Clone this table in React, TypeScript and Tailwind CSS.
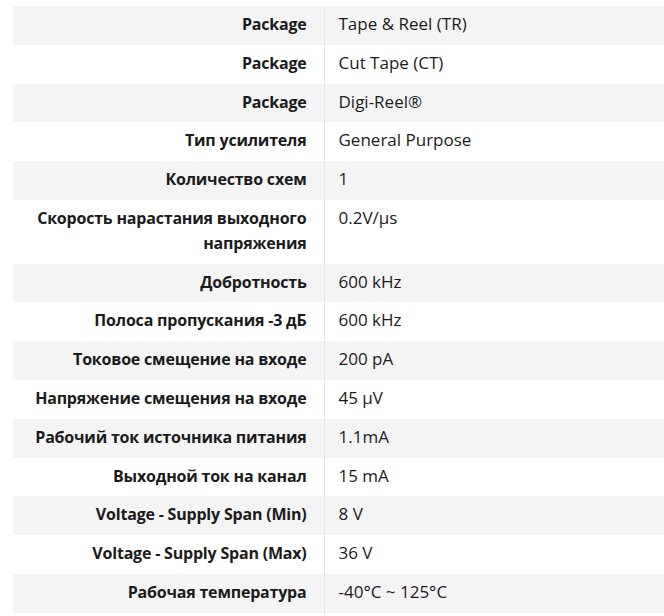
const ROWS: [string, string][] = [
  ["Package", "Tape & Reel (TR)"],
  ["Package", "Cut Tape (CT)"],
  ["Package", "Digi-Reel®"],
  ["Тип усилителя", "General Purpose"],
  ["Количество схем", "1"],
  ["Скорость нарастания выходного напряжения", "0.2V/µs"],
  ["Добротность", "600 kHz"],
  ["Полоса пропускания -3 дБ", "600 kHz"],
  ["Токовое смещение на входе", "200 pA"],
  ["Напряжение смещения на входе", "45 µV"],
  ["Рабочий ток источника питания", "1.1mA"],
  ["Выходной ток на канал", "15 mA"],
  ["Voltage - Supply Span (Min)", "8 V"],
  ["Voltage - Supply Span (Max)", "36 V"],
  ["Рабочая температура", "-40°C ~ 125°C"],
  ["\u00a0", "\u00a0"],
];

export default function App() {
  return (
    <div className="h-[616px] overflow-hidden bg-white pt-[6px] pl-[13px] font-['Open_Sans','Noto_Sans',sans-serif] leading-[24.8px] text-[#1b1b1b]">
      <table className="w-[651px] border-collapse">
        <tbody>
          {ROWS.map(([label, value], i) => (
            <tr key={i} className={i % 2 === 0 ? "bg-[#f4f4f4]" : "bg-white"}>
              <td className="w-[311px] border-r border-[#e6e6e6] pt-[6px] pb-[8px] pr-[17px] pl-[14px] text-right align-top text-[16px] font-bold tracking-[-0.2px]">
                {label}
              </td>
              <td className="pt-[6px] pb-[8px] pl-[14px] align-top text-[17px]">{value}</td>
            </tr>
          ))}
        </tbody>
      </table>
    </div>
  );
}
